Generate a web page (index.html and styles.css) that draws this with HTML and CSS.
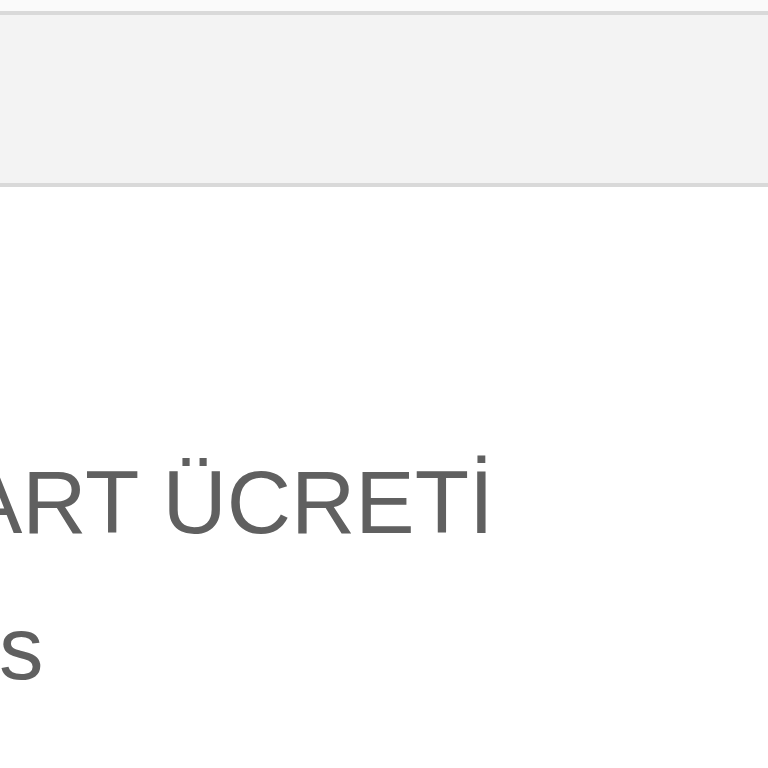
FILE: index.html
```html
<!DOCTYPE html>
<html lang="tr">
<head>
<meta charset="utf-8">
<link rel="stylesheet" href="styles.css">
</head>
<body>
<div class="top-strip"></div>
<header class="bar"></header>
<main class="content">
  <h1 class="title">ART ÜCRETİ</h1>
  <p class="sub">s</p>
</main>
</body>
</html>
```
FILE: styles.css
```css
html, body {
  margin: 0;
  padding: 0;
  background: #ffffff;
  overflow: hidden;
}
body {
  font-family: "Liberation Sans", Arial, Helvetica, sans-serif;
  color: #606060;
}
.top-strip {
  height: 11px;
  background: #fafafa;
}
.bar {
  height: 168px;
  background: #f3f3f3;
  border-top: 4px solid #d9d9d9;
  border-bottom: 4px solid #d9d9d9;
}
.content {
  padding-top: 270px;
}
.title {
  margin: 0 0 0 -37px;
  font-size: 89px;
  line-height: 90px;
  font-weight: normal;
  white-space: nowrap;
}
.sub {
  margin: 56px 0 0 -1px;
  font-size: 89px;
  line-height: 90px;
  white-space: nowrap;
}
```
